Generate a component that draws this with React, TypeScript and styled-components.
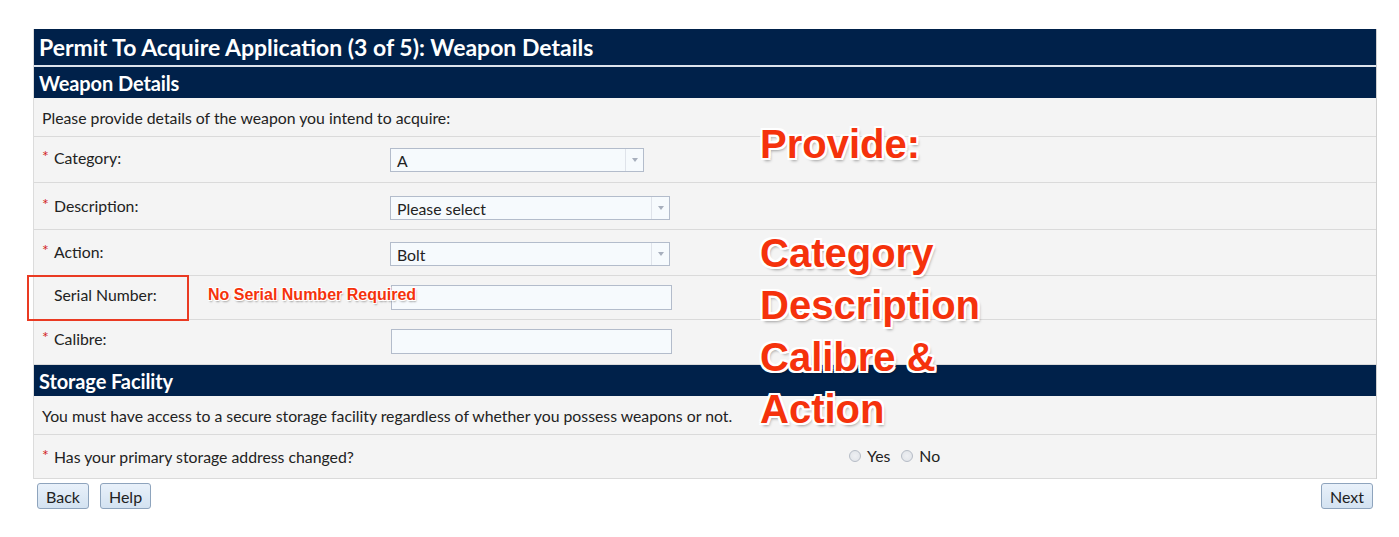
import React from "react";
import styled, { createGlobalStyle } from "styled-components";

const Global = createGlobalStyle`
  html, body { margin: 0; padding: 0; background: #ffffff; }
  body { font-family: Lato, "Open Sans", Arial, sans-serif; color: #222; }
`;

const Page = styled.div`
  position: relative;
  width: 1399px;
  height: 537px;
  padding: 29px 0 0 33px;
  box-sizing: border-box;
`;

const Panel = styled.div`
  width: 1344px;
  border-right: 1px solid #cfcfcf;
  border-left: 1px solid #dcdcdc;
  box-sizing: border-box;
`;

const TitleBar = styled.div`
  background: #00214a;
  color: #fff;
  height: 36px;
  display: flex;
  align-items: center;
  padding-left: 5px;
  font-size: 23px;
  font-weight: 700;
`;

const SectionBar = styled.div<{ $divider: boolean }>`
  background: #00214a;
  color: #fff;
  height: 31px;
  border-top: ${(p) => (p.$divider ? "2px solid #dde3ec" : "none")};
  display: flex;
  align-items: center;
  padding-left: 5px;
  font-size: 20px;
  font-weight: 700;
  letter-spacing: -0.1px;
`;

const Row = styled.div<{ $h: number; $pt: number }>`
  background: #f4f4f4;
  border-bottom: 1px solid #dadada;
  height: ${(p) => p.$h}px;
  box-sizing: border-box;
  padding: ${(p) => p.$pt}px 8px 0 8px;
  display: grid;
  grid-template-columns: 348px 1fr;
  font-size: 15.8px;
`;

const NoteRow = styled.div`
  background: #f4f4f4;
  border-bottom: 1px solid #dadada;
  height: 39px;
  box-sizing: border-box;
  padding: 0 8px;
  display: flex;
  align-items: center;
  font-size: 15.8px;
`;

const QuestionRow = styled.div`
  background: #f4f4f4;
  border-bottom: 1px solid #dadada;
  height: 44px;
  box-sizing: border-box;
  padding: 0 8px;
  display: grid;
  grid-template-columns: 807px 1fr;
  align-items: center;
  font-size: 15.8px;
`;

const Label = styled.div`
  display: flex;
  align-items: flex-start;
  line-height: 20px;
`;

const Star = styled.span`
  color: #d21f1f;
  width: 12px;
  font-size: 16px;
  line-height: 16px;
`;

const Select = styled.div<{ $w: number }>`
  width: ${(p) => p.$w}px;
  height: 24px;
  box-sizing: border-box;
  border: 1px solid #b3bccb;
  background: #f6fafd;
  display: flex;
  align-items: center;
  font-size: 15.8px;
`;

const SelectValue = styled.span`
  flex: 1;
  padding-left: 6px;
`;

const SelectArrow = styled.span`
  width: 17px;
  height: 100%;
  border-left: 1px solid #dfe3ea;
  display: flex;
  align-items: center;
  justify-content: center;
  &::after {
    content: "";
    border-left: 3.5px solid transparent;
    border-right: 3.5px solid transparent;
    border-top: 4px solid #a7afbd;
  }
`;

const TextInput = styled.div`
  width: 281px;
  height: 25px;
  box-sizing: border-box;
  border: 1px solid #b3bccb;
  background: #f6fafd;
  margin-left: 1px;
`;

const Radios = styled.div`
  display: flex;
  align-items: center;
  gap: 6px;
  margin-top: -2px;
`;

const RadioItem = styled.label`
  display: flex;
  align-items: center;
  gap: 6px;
  margin-right: 5px;
`;

const RadioCircle = styled.span`
  width: 12px;
  height: 12px;
  border-radius: 50%;
  border: 1px solid #b6bcc6;
  background: radial-gradient(circle at 50% 50%, #eef0f3 0%, #dfe2e7 100%);
  box-sizing: border-box;
`;

const ButtonBar = styled.div`
  width: 1344px;
  display: flex;
  justify-content: space-between;
  padding: 4px 4px 0 4px;
  box-sizing: border-box;
`;

const ButtonGroup = styled.div`
  display: flex;
  gap: 11px;
`;

const Button = styled.button`
  height: 26px;
  padding: 0 8px;
  font-family: Lato, Arial, sans-serif;
  font-size: 16px;
  color: #222;
  border: 1px solid #8ea4bd;
  border-radius: 3px;
  background: linear-gradient(#e9f1fa, #d3e2f1);
`;

const outline = `
  -2px -2px 0 #fff, 2px -2px 0 #fff, -2px 2px 0 #fff, 2px 2px 0 #fff,
  0 -2px 0 #fff, 0 2px 0 #fff, -2px 0 0 #fff, 2px 0 0 #fff,
  2px 3px 3px rgba(0,0,0,0.35)
`;

const Callout = styled.div`
  position: absolute;
  left: 760px;
  top: 118px;
  font-family: "Liberation Sans", Arial, sans-serif;
  font-weight: 700;
  font-size: 40px;
  line-height: 52px;
  color: #f5320c;
  text-shadow: ${outline};
`;

const CalloutHead = styled.div`
  margin-bottom: 57px;
`;

const InlineNote = styled.div`
  position: absolute;
  left: 208px;
  top: 285px;
  font-family: "Liberation Sans", Arial, sans-serif;
  font-weight: 700;
  font-size: 16px;
  line-height: 20px;
  color: #f5320c;
  text-shadow: -1px -1px 0 #fff, 1px -1px 0 #fff, -1px 1px 0 #fff, 1px 1px 0 #fff, 1px 2px 2px rgba(0,0,0,0.35);
`;

const Highlight = styled.div`
  position: absolute;
  left: 27px;
  top: 275px;
  width: 162px;
  height: 46px;
  box-sizing: border-box;
  border: 2px solid #ea3a22;
`;

type Field = {
  label: string;
  required: boolean;
  h: number;
  pt: number;
  control: React.ReactNode;
};

const fields: Field[] = [
  { label: "Category:", required: true, h: 46, pt: 11, control: <Select $w={254}><SelectValue>A</SelectValue><SelectArrow /></Select> },
  { label: "Description:", required: true, h: 47, pt: 13, control: <Select $w={280}><SelectValue>Please select</SelectValue><SelectArrow /></Select> },
  { label: "Action:", required: true, h: 46, pt: 12, control: <Select $w={280}><SelectValue>Bolt</SelectValue><SelectArrow /></Select> },
  { label: "Serial Number:", required: false, h: 44, pt: 9, control: <TextInput /> },
  { label: "Calibre:", required: true, h: 45, pt: 9, control: <TextInput /> },
];

export default function App() {
  return (
    <>
      <Global />
      <Page>
        <Panel>
          <TitleBar>Permit To Acquire Application (3 of 5): Weapon Details</TitleBar>
          <SectionBar $divider>Weapon Details</SectionBar>
          <NoteRow>Please provide details of the weapon you intend to acquire:</NoteRow>
          {fields.map((f) => (
            <Row key={f.label} $h={f.h} $pt={f.pt}>
              <Label>
                <Star>{f.required ? "*" : ""}</Star>
                {f.label}
              </Label>
              <div>{f.control}</div>
            </Row>
          ))}
          <SectionBar $divider={false}>Storage Facility</SectionBar>
          <NoteRow>You must have access to a secure storage facility regardless of whether you possess weapons or not.</NoteRow>
          <QuestionRow>
            <Label>
              <Star>*</Star>
              Has your primary storage address changed?
            </Label>
            <Radios>
              <RadioItem><RadioCircle />Yes</RadioItem>
              <RadioItem><RadioCircle />No</RadioItem>
            </Radios>
          </QuestionRow>
        </Panel>
        <ButtonBar>
          <ButtonGroup>
            <Button>Back</Button>
            <Button>Help</Button>
          </ButtonGroup>
          <Button>Next</Button>
        </ButtonBar>
        <Highlight />
        <InlineNote>No Serial Number Required</InlineNote>
        <Callout>
          <CalloutHead>Provide:</CalloutHead>
          <div>Category</div>
          <div>Description</div>
          <div>Calibre &amp;</div>
          <div>Action</div>
        </Callout>
      </Page>
    </>
  );
}
